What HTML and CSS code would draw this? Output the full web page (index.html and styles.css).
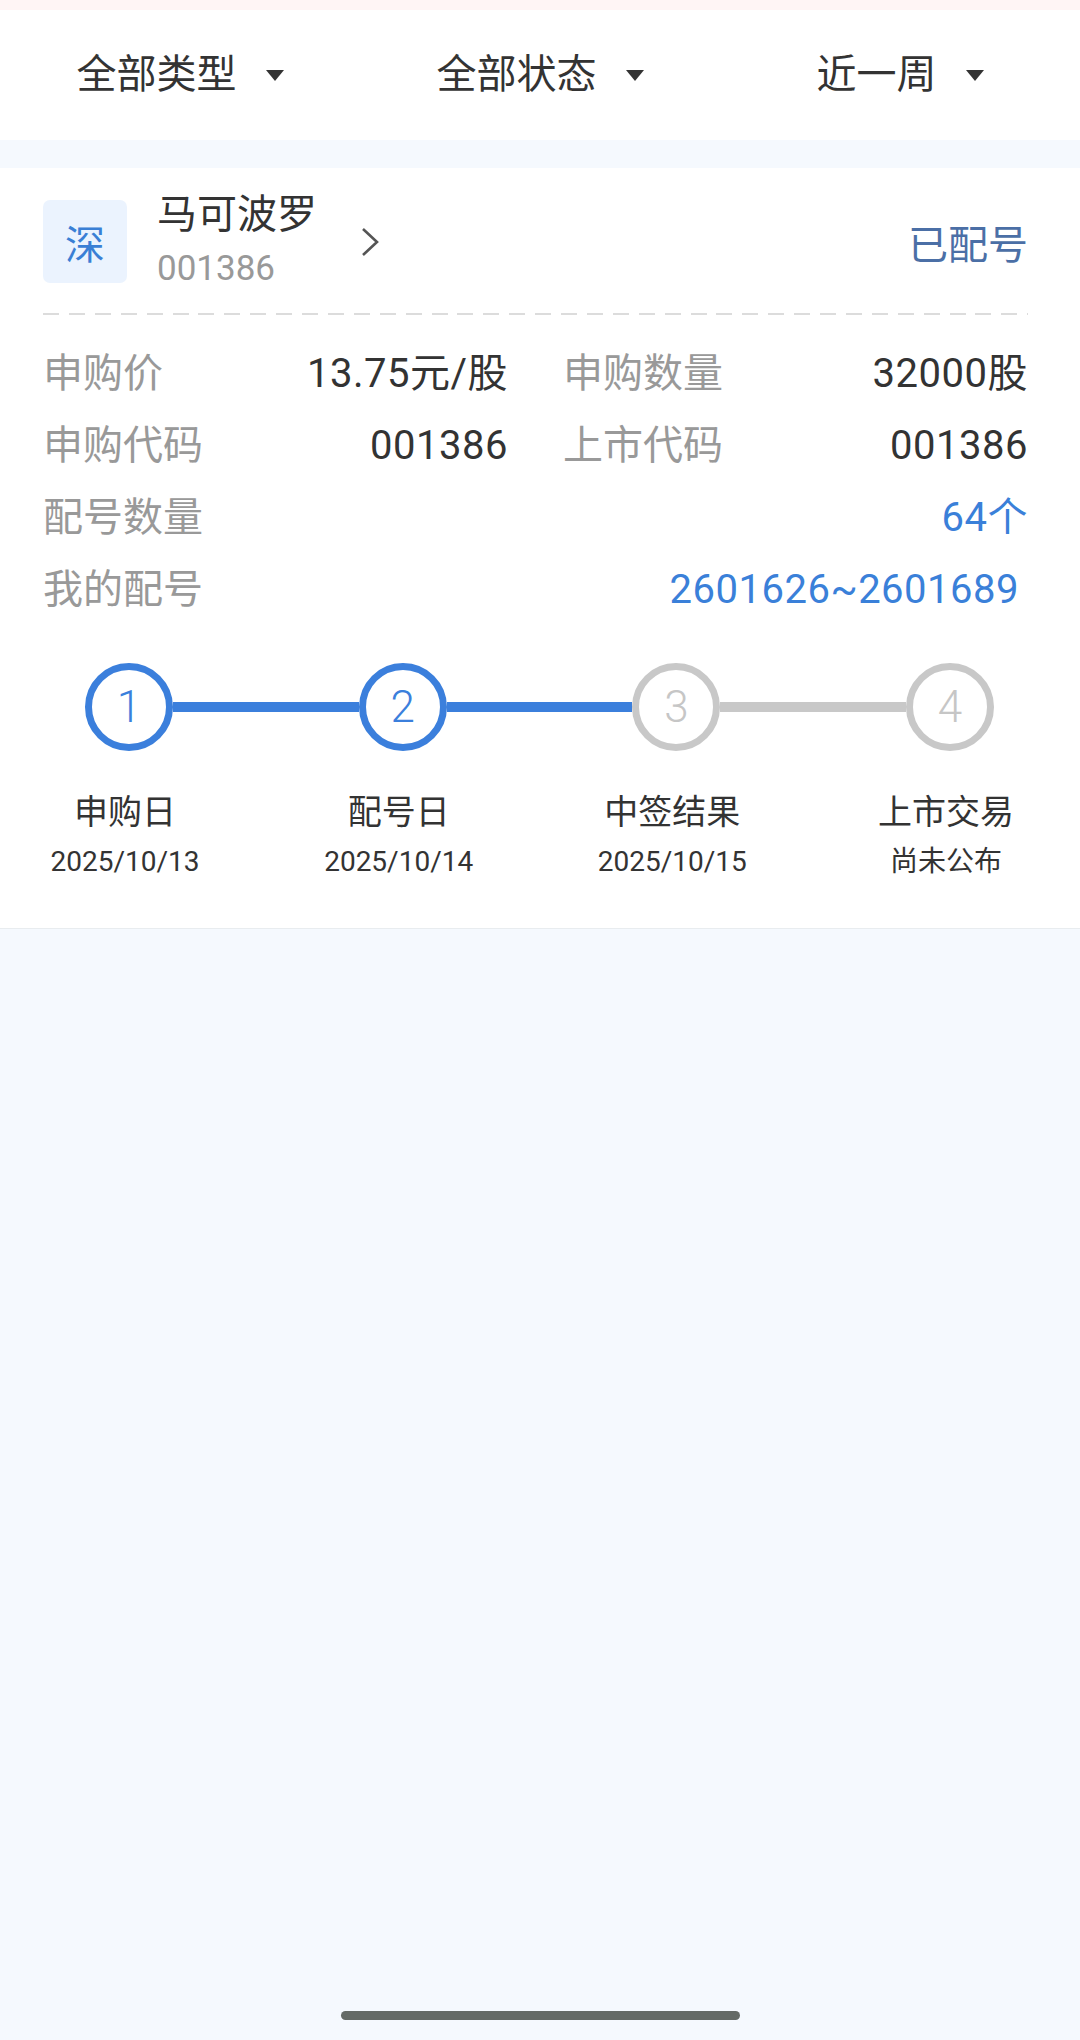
FILE: index.html
```html
<!DOCTYPE html>
<html lang="zh-CN">
<head>
  <meta charset="UTF-8">
  <title>新股申购记录</title>
  <link rel="stylesheet" href="styles.css">
</head>
<body>

  <div class="status-strip"></div>

  <div class="filters">
    <div class="filter"><span>全部类型</span><i class="caret"></i></div>
    <div class="filter"><span>全部状态</span><i class="caret"></i></div>
    <div class="filter"><span>近一周</span><i class="caret"></i></div>
  </div>

  <div class="card">
    <div class="card-head">
      <div class="market-tag">深</div>
      <div class="stock-name">
        <div class="name">马可波罗</div>
        <div class="code">001386</div>
      </div>
      <svg class="chevron" width="18" height="30" viewBox="0 0 18 30">
        <polyline points="2,2 16,15 2,28" fill="none" stroke="#555" stroke-width="2.6"/>
      </svg>
      <div class="state">已配号</div>
    </div>

    <div class="dash-line"></div>

    <div class="info-grid">
      <div class="info-cell"><span class="label">申购价</span><span class="value">13.75元/股</span></div>
      <div class="info-cell"><span class="label">申购数量</span><span class="value">32000股</span></div>
      <div class="info-cell"><span class="label">申购代码</span><span class="value">001386</span></div>
      <div class="info-cell"><span class="label">上市代码</span><span class="value">001386</span></div>
      <div class="info-cell wide"><span class="label">配号数量</span><span class="value blue">64个</span></div>
      <div class="info-cell wide"><span class="label">我的配号</span><span class="value blue range">2601626~2601689</span></div>
    </div>

    <div class="steps-track">
      <div class="dot done">1</div>
      <div class="bar done"></div>
      <div class="dot done">2</div>
      <div class="bar done"></div>
      <div class="dot">3</div>
      <div class="bar"></div>
      <div class="dot">4</div>
    </div>

    <div class="steps-text">
      <div class="step"><div class="step-name">申购日</div><div class="step-date">2025/10/13</div></div>
      <div class="step"><div class="step-name">配号日</div><div class="step-date">2025/10/14</div></div>
      <div class="step"><div class="step-name">中签结果</div><div class="step-date">2025/10/15</div></div>
      <div class="step"><div class="step-name">上市交易</div><div class="step-date">尚未公布</div></div>
    </div>
  </div>

  <div class="home-bar"></div>

</body>
</html>
```

FILE: styles.css
```css
body {
  margin: 0;
  height: 100vh;
  display: flex;
  flex-direction: column;
  background: #f5f9fe;
  font-family: Roboto, "Noto Sans CJK SC", sans-serif;
  color: #333;
}

.status-strip {
  height: 10px;
  background: #fff5f5;
}

/* filter bar */
.filters {
  height: 130px;
  background: #fff;
  display: grid;
  grid-template-columns: repeat(3, 1fr);
  align-items: center;
}

.filter {
  display: flex;
  justify-content: center;
  align-items: center;
  gap: 29px;
  font-size: 40px;
  line-height: 50px;
  color: #333;
}

.caret {
  width: 0;
  height: 0;
  border-left: 9.5px solid transparent;
  border-right: 9.5px solid transparent;
  border-top: 11px solid #333;
}

/* card */
.card {
  margin-top: 28px;
  background: #fff;
  padding: 32px 52px 46px 43px;
  border-bottom: 1px solid #e8ecef;
}

.card-head {
  display: flex;
  align-items: center;
  height: 83px;
}

.market-tag {
  width: 84px;
  height: 83px;
  border-radius: 7px;
  background: #ebf3fe;
  color: #3a7fd5;
  font-size: 40px;
  display: flex;
  align-items: center;
  justify-content: center;
}

.stock-name {
  margin-left: 30px;
}

.stock-name .name {
  font-size: 40px;
  line-height: 48px;
  color: #333;
}

.stock-name .code {
  margin-top: 7px;
  font-size: 35px;
  line-height: 46px;
  color: #999;
}

.chevron {
  margin-left: 44px;
}

.state {
  margin-left: auto;
  font-size: 40px;
  color: #4b6fa6;
}

.dash-line {
  margin-top: 30px;
  height: 2px;
  background: repeating-linear-gradient(to right, #dcdcdc 0 16px, transparent 16px 25.9px);
}

/* info rows */
.info-grid {
  margin-top: 23px;
  display: grid;
  grid-template-columns: 1fr 1fr;
  column-gap: 55px;
}

.info-cell {
  display: flex;
  justify-content: space-between;
  font-size: 40px;
  line-height: 72px;
}

.info-cell.wide {
  grid-column: 1 / 3;
}

.label {
  color: #999;
}

.value {
  color: #333;
  letter-spacing: 0.5px;
}

.value.blue {
  color: #3a80d9;
}

.value.range {
  margin-right: 9px;
}

/* progress */
.steps-track {
  margin-top: 37px;
  padding: 0 34px 0 42px;
  display: flex;
  align-items: center;
}

.dot {
  width: 88px;
  height: 88px;
  box-sizing: border-box;
  border-radius: 50%;
  border: 7px solid #c8c8c8;
  color: #c6c6c6;
  font-size: 44px;
  font-weight: 300;
  display: flex;
  align-items: center;
  justify-content: center;
}

.dot.done {
  border-color: #3b7fdc;
  color: #3b7fdc;
}

.bar {
  flex: 1;
  height: 10px;
  background: #c8c8c8;
}

.bar.done {
  background: #3b7fdc;
}

.steps-text {
  margin-top: 38px;
  padding: 0 38px 0 38px;
  display: flex;
  justify-content: space-between;
}

.step {
  width: 88px;
  display: flex;
  flex-direction: column;
  align-items: center;
  white-space: nowrap;
}

.step-name {
  font-size: 34px;
  line-height: 46px;
  color: #333;
}

.step-date {
  margin-top: 7px;
  font-size: 28px;
  line-height: 40px;
  color: #333;
}

.home-bar {
  margin: auto auto 20px;
  width: 399px;
  height: 9px;
  border-radius: 5px;
  background: #646a66;
}
```
